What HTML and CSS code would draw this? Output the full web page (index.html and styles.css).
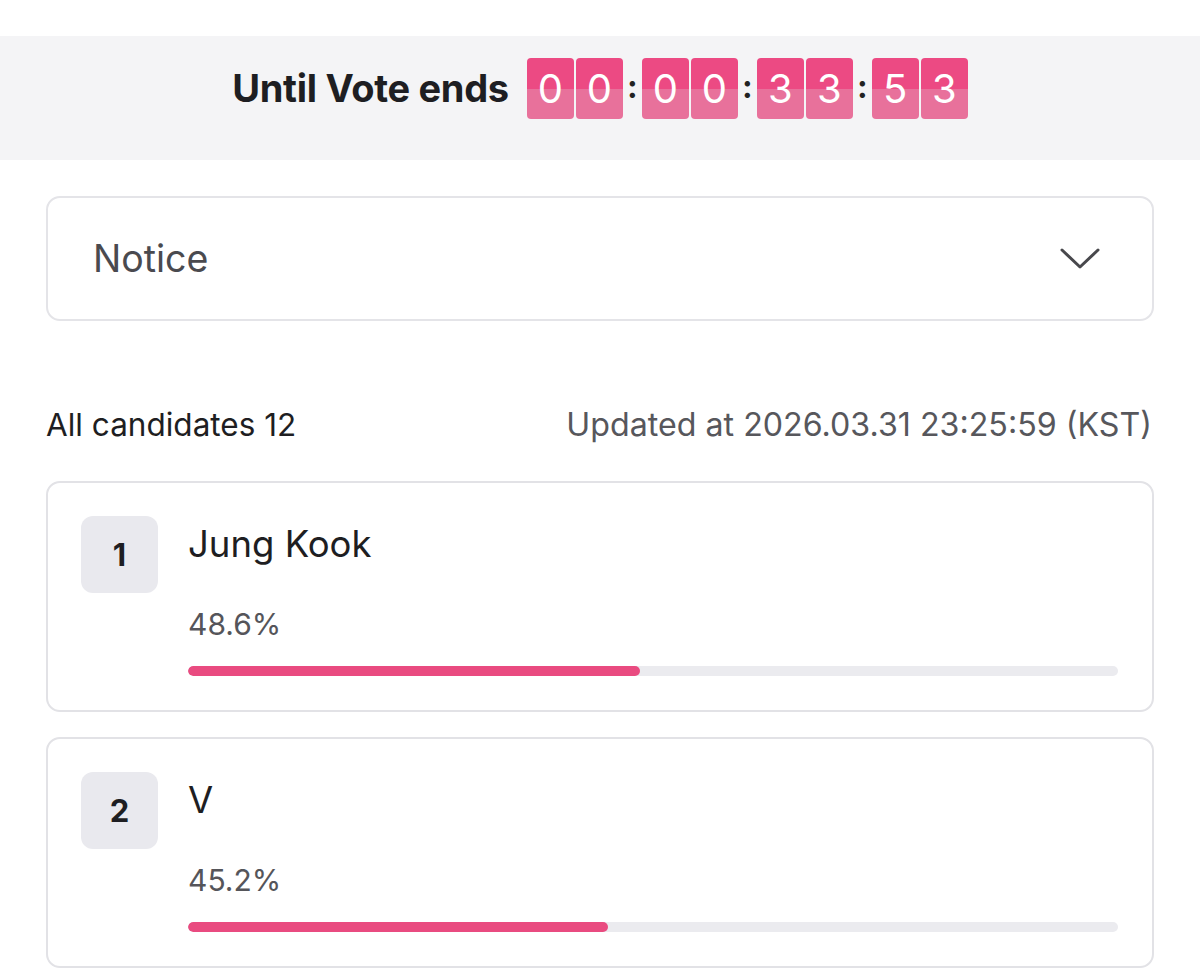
FILE: index.html
```html
<!DOCTYPE html>
<html>
<head>
<meta charset="utf-8">
<link rel="stylesheet" href="styles.css">
</head>
<body>
<div class="countdown-band">
  <span class="until">Until Vote ends</span>
  <div class="timer">
    <span class="digit">0</span><span class="digit">0</span><span class="colon">:</span>
    <span class="digit">0</span><span class="digit">0</span><span class="colon">:</span>
    <span class="digit">3</span><span class="digit">3</span><span class="colon">:</span>
    <span class="digit">5</span><span class="digit">3</span>
  </div>
</div>
<main class="content">
  <div class="notice">
    <span class="notice-title">Notice</span>
    <svg class="chevron" width="40" height="24" viewBox="0 0 40 24"><path d="M2 3 L20 20 L38 3" fill="none" stroke="#48484c" stroke-width="3" stroke-linecap="round" stroke-linejoin="round"/></svg>
  </div>
  <div class="list-head">
    <span class="all">All candidates 12</span>
    <span class="updated">Updated at 2026.03.31 23:25:59 (KST)</span>
  </div>
  <div class="card">
    <div class="rank">1</div>
    <div class="info">
      <div class="name">Jung Kook</div>
      <div class="pct">48.6%</div>
      <div class="track"><div class="fill" style="width:48.6%"></div></div>
    </div>
  </div>
  <div class="card">
    <div class="rank">2</div>
    <div class="info">
      <div class="name">V</div>
      <div class="pct">45.2%</div>
      <div class="track"><div class="fill" style="width:45.2%"></div></div>
    </div>
  </div>
</main>
</body>
</html>
```
FILE: styles.css
```css
* { box-sizing: border-box; }
body {
  margin: 0;
  background: #ffffff;
  font-family: Inter, "Noto Sans", sans-serif;
  color: #1d1d20;
}
.countdown-band {
  margin-top: 36px;
  height: 124px;
  padding-bottom: 20px;
  background: #f4f4f6;
  display: flex;
  align-items: center;
  justify-content: center;
  gap: 20px;
}
.until {
  font-size: 38px;
  font-weight: 700;
  color: #1e1e22;
  letter-spacing: -0.3px;
  margin-right: -2px;
}
.timer {
  display: flex;
  align-items: center;
  gap: 2px;
}
.digit {
  width: 47px;
  height: 61px;
  border-radius: 4px;
  background: linear-gradient(to bottom, #ec4a83 0%, #ec4a83 50%, #e8719b 50%, #e8719b 100%);
  color: #ffffff;
  font-size: 40px;
  display: flex;
  align-items: center;
  justify-content: center;
}
.colon {
  width: 15px;
  text-align: center;
  font-size: 32px;
  font-weight: 700;
  color: #222;
  line-height: 1;
  padding-bottom: 2px;
}
.content {
  padding: 36px 46px 0 46px;
}
.notice {
  height: 125px;
  border: 2px solid #e4e4e8;
  border-radius: 14px;
  display: flex;
  align-items: center;
  justify-content: space-between;
  padding: 0 52px 0 45px;
}
.notice-title {
  font-size: 37.5px;
  color: #4a4a4f;
}
.list-head {
  margin-top: 86px;
  height: 34px;
  display: flex;
  justify-content: space-between;
  align-items: center;
}
.all {
  font-size: 31.5px;
  color: #1e1e22;
}
.updated {
  font-size: 32.2px;
  color: #57575c;
  margin-right: 2px;
}
.card {
  margin-top: 40px;
  height: 231px;
  border: 2px solid #e2e2e6;
  border-radius: 14px;
  padding: 33px 34px 0 33px;
  display: flex;
  gap: 30px;
}
.card + .card { margin-top: 25px; }
.rank {
  flex: none;
  width: 77px;
  height: 77px;
  border-radius: 12px;
  background: #e9e9ee;
  font-size: 31px;
  font-weight: 700;
  color: #1e1e22;
  display: flex;
  align-items: center;
  justify-content: center;
}
.info {
  flex: 1;
}
.name {
  margin-top: 6px;
  font-size: 36.5px;
  line-height: 44px;
  color: #1e1e22;
}
.pct {
  margin-top: 40px;
  font-size: 30px;
  line-height: 36px;
  color: #55555a;
}
.track {
  margin-top: 24px;
  height: 10px;
  border-radius: 5px;
  background: #ebebef;
  overflow: hidden;
}
.fill {
  height: 100%;
  border-radius: 5px;
  background: #e94b80;
}
```
